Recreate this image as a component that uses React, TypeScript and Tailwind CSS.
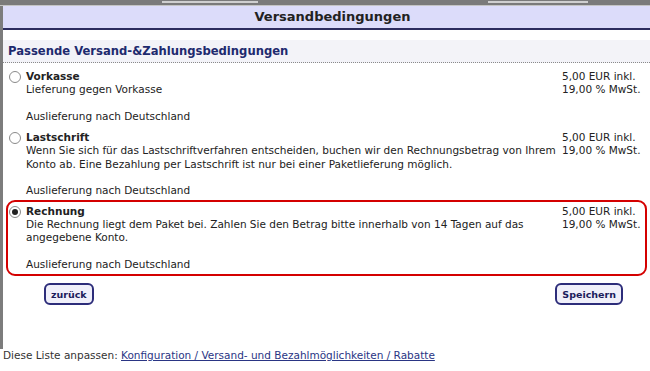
const font = { fontFamily: '"DejaVu Sans", Verdana, sans-serif' };

function Radio({ checked }: { checked?: boolean }) {
  return (
    <span className="mt-[1px] flex h-[12px] w-[12px] shrink-0 items-center justify-center rounded-full border border-[#8a8a8a] bg-white">
      {checked && <span className="h-[6px] w-[6px] rounded-full bg-[#222]" />}
    </span>
  );
}

type Opt = { name: string; desc: string; checked?: boolean; pad: string };

const options: Opt[] = [
  { name: "Vorkasse", desc: "Lieferung gegen Vorkasse", pad: "py-[2px]" },
  {
    name: "Lastschrift",
    desc: "Wenn Sie sich für das Lastschriftverfahren entscheiden, buchen wir den Rechnungsbetrag von Ihrem Konto ab. Eine Bezahlung per Lastschrift ist nur bei einer Paketlieferung möglich.",
    pad: "pt-[2px] pb-0",
  },
  {
    name: "Rechnung",
    desc: "Die Rechnung liegt dem Paket bei. Zahlen Sie den Betrag bitte innerhalb von 14 Tagen auf das angegebene Konto.",
    checked: true,
    pad: "py-[3px]",
  },
];

function Row({ o }: { o: Opt }) {
  return (
    <div
      className={
        "mx-[3px] flex border-2 pl-[1px] pr-[2px] " +
        o.pad +
        (o.checked ? " rounded-[9px] border-[#d40000]" : " border-transparent")
      }
    >
      <Radio checked={o.checked} />
      <div className="ml-[5px] w-[533px] shrink-0">
        <div className="font-bold">{o.name}</div>
        <div>{o.desc}</div>
        <div>&nbsp;</div>
        <div>Auslieferung nach Deutschland</div>
      </div>
      <div className="ml-[3px] whitespace-nowrap">
        <div>5,00 EUR inkl.</div>
        <div>19,00 % MwSt.</div>
      </div>
    </div>
  );
}

function Btn({ children }: { children: string }) {
  return (
    <button className="h-[22px] rounded-[6px] border-2 border-[#2d2d7a] bg-[#f0f0fa] px-[5px] text-[9.5px] font-bold text-[#1c1c5c]">
      {children}
    </button>
  );
}

export default function App() {
  return (
    <div style={font} className="flex h-[371px] w-[650px] flex-col overflow-hidden bg-white text-[10.5px] leading-[13.3px] text-[#222]">
      {/* strip of the page behind the dialog */}
      <div className="flex h-[6px] shrink-0 items-start gap-[230px] border-b border-[#c4c4c4] bg-[#7a7a7a] pl-[162px]">
        <div className="mt-[1px] h-[2px] w-[96px] bg-[#cfcfcf]" />
        <div className="mt-[1px] h-[2px] w-[100px] bg-[#cfcfcf]" />
      </div>
      <div className="flex flex-1 flex-col border-l-[3px] border-[#7c7c7c]">
        <div className="flex h-[24px] shrink-0 items-center justify-center border-b-2 border-[#2c2c5e] bg-[#dcdcfa] pl-[12px] text-[13px] font-bold text-[#222]">
          Versandbedingungen
        </div>
        <div className="mt-[10px] flex h-[23px] shrink-0 items-center border-b border-dotted border-[#8a8a8a] bg-[#f3f3f8] pl-[5px] pt-[2px] text-[11.6px] font-bold text-[#1e2a6e]">
          Passende Versand-&amp;Zahlungsbedingungen
        </div>
        <div className="mt-[3px] flex flex-col">
          {options.map((o) => (
            <Row key={o.name} o={o} />
          ))}
        </div>
        <div className="mt-[7px] flex justify-between pl-[41px] pr-[27px]">
          <Btn>zurück</Btn>
          <Btn>Speichern</Btn>
        </div>
        <div className="h-[40px]" />
      </div>
      <div className="pb-[9px] pl-[3px] text-[#333]">
        Diese Liste anpassen:{" "}
        <a href="#" className="text-[#2a3584] underline">
          Konfiguration / Versand- und Bezahlmöglichkeiten / Rabatte
        </a>
      </div>
    </div>
  );
}
